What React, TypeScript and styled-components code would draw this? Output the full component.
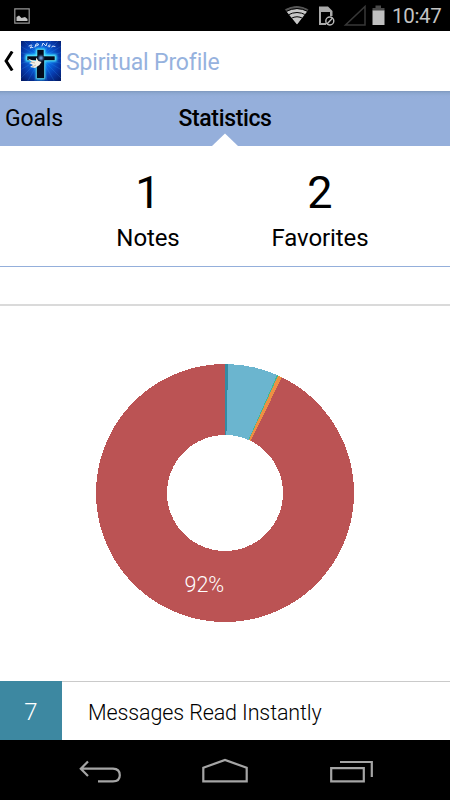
import React from 'react';
import styled, { createGlobalStyle } from 'styled-components';

const GlobalStyle = createGlobalStyle`
  * { box-sizing: border-box; }
  body { margin: 0; background: #fff; font-family: Roboto, "Open Sans", sans-serif; color: #000; }
  svg { display: block; flex: none; }
`;

const Screen = styled.div`
  width: 450px;
  height: 800px;
  display: flex;
  flex-direction: column;
  background: #fff;
  overflow: hidden;
`;

const StatusBar = styled.div`
  height: 31px;
  flex: none;
  display: flex;
  align-items: center;
  justify-content: space-between;
  padding: 0 8px 0 14px;
  background: #000;
`;

const StatusRight = styled.div`
  display: flex;
  align-items: center;
`;

const Clock = styled.span`
  margin-left: 7px;
  width: 50px;
  white-space: nowrap;
  font-size: 20.5px;
  line-height: 32px;
  height: 31px;
  color: #c4c4c4;
  letter-spacing: -0.3px;
`;

const Header = styled.header`
  height: 60px;
  flex: none;
  display: flex;
  align-items: center;
  padding-left: 3px;
`;

const AppIcon = styled.svg`
  margin-left: 7px;
`;

const Title = styled.h1`
  margin: 4px 0 0 5px;
  font-size: 23px;
  line-height: 30px;
  font-weight: 400;
  color: #96b2de;
  letter-spacing: -0.15px;
  white-space: nowrap;
`;

const Tabs = styled.nav`
  height: 55px;
  flex: none;
  display: grid;
  grid-template-columns: 150px 150px 150px;
  background: linear-gradient(#7f98bd 0, #8ca7d0 2px, #94aeda 5px, #95afdb 8px);
`;

const Tab = styled.div<{ $active?: boolean }>`
  position: relative;
  padding: ${p => (p.$active ? '0' : '0 0 0 5px')};
  text-align: ${p => (p.$active ? 'center' : 'left')};
  font-size: 23px;
  line-height: 55px;
  font-weight: ${p => (p.$active ? 500 : 400)};
  letter-spacing: ${p => (p.$active ? '-0.35px' : '-0.15px')};
`;

const Pointer = styled.svg`
  position: absolute;
  left: 62px;
  bottom: 0;
`;

const Totals = styled.section`
  height: 121px;
  flex: none;
  display: flex;
  padding: 18px 0 0 62px;
  border-bottom: 1px solid #94afdb;
`;

const Total = styled.div`
  width: 172px;
  text-align: center;
`;

const TotalValue = styled.div`
  font-size: 45px;
  line-height: 58px;
`;

const TotalLabel = styled.div`
  font-size: 24px;
  line-height: 33px;
  letter-spacing: -0.1px;
`;

const Spacer = styled.div`
  height: 39px;
  flex: none;
  border-bottom: 2px solid #dadada;
`;

const ChartPanel = styled.section`
  height: 375px;
  flex: none;
  display: flex;
  justify-content: center;
  padding-top: 58px;
`;

const ChartLabel = styled.text`
  font-family: Roboto, sans-serif;
  font-size: 21.5px;
  font-weight: 300;
  fill: #fff;
`;

const Row = styled.div`
  height: 59px;
  flex: none;
  display: flex;
  line-height: 62px;
  font-weight: 300;
`;

const Count = styled.div`
  width: 62px;
  background: #3d88a1;
  color: #fff;
  text-align: center;
  font-size: 24px;
`;

const RowLabel = styled.div`
  flex: 1;
  padding-left: 26px;
  border-top: 1px solid #cacaca;
  font-size: 21.5px;
  line-height: 61px;
  letter-spacing: -0.12px;
`;

const NavBar = styled.div`
  height: 60px;
  flex: none;
  background: #000;
`;

const CENTER = 129;
const OUTER = 129;
const INNER = 58;

const point = (radius: number, degrees: number) => {
  const a = (degrees * Math.PI) / 180;
  return `${CENTER + radius * Math.sin(a)} ${CENTER - radius * Math.cos(a)}`;
};

const slicePath = (from: number, to: number) => {
  const large = to - from > 180 ? 1 : 0;
  return `M${point(OUTER, from)} A${OUTER} ${OUTER} 0 ${large} 1 ${point(OUTER, to)} L${point(INNER, to)} A${INNER} ${INNER} 0 ${large} 0 ${point(INNER, from)}Z`;
};

const slices = [
  { from: 0, to: 1.4, color: '#358aa2' },
  { from: 1.4, to: 23.8, color: '#6bb5cf' },
  { from: 23.8, to: 24.3, color: '#43b88c' },
  { from: 24.3, to: 26.2, color: '#ed9043' },
  { from: 26.2, to: 360, color: '#bb5354' },
];

const Donut = () => (
  <svg width="258" height="258" viewBox="0 0 258 258">
    <g shapeRendering="crispEdges">
      {slices.map(s => <path key={s.from} d={slicePath(s.from, s.to)} fill={s.color} />)}
    </g>
    <ChartLabel x="88.5" y="227.5">92%</ChartLabel>
  </svg>
);

const rays = Array.from({ length: 24 }, (_, i) => i * 15);

const LogoIcon = () => (
  <AppIcon width="40" height="40" viewBox="0 0 40 40">
    <defs>
      <radialGradient id="sky" cx="50%" cy="45%" r="70%">
        <stop offset="0" stopColor="#20b4ff" />
        <stop offset=".35" stopColor="#0868e4" />
        <stop offset=".7" stopColor="#0738a8" />
        <stop offset="1" stopColor="#041c68" />
      </radialGradient>
      <filter id="glow" x="-40%" y="-40%" width="180%" height="180%">
        <feGaussianBlur stdDeviation=".8" />
      </filter>
      <clipPath id="tile"><rect width="40" height="40" /></clipPath>
    </defs>
    <rect width="40" height="40" fill="url(#sky)" />
    <g clipPath="url(#tile)" stroke="#34a5ff" strokeWidth=".6" opacity=".3">
      {rays.map(r => <path key={r} d="M20 17V-13" transform={`rotate(${r} 20 17)`} />)}
    </g>
    <path d="M15.5 8H23.5V14H35V20H23.5V38H15.5V20H5V14H15.5Z" fill="#48edff" stroke="#48edff" strokeWidth="1.2" filter="url(#glow)" />
    <path d="M16 8.5H23V15H34V19.5H23.5V37.5H15.5V19.5H6V15H16Z" fill="#030b1b" stroke="#62dfff" strokeWidth=".6" />
    <circle cx="20" cy="17" r="2.2" fill="#80b6ff" filter="url(#glow)" />
    <path d="M6.5 17.5 12 19.5 15 20 15 16.5 17.5 20 20.5 21 18.5 24 14 27 9 26 12 24 8 22 11 21Z" fill="#f4efe6" />
    <path d="M10 21 14 22M11 26 15 24" stroke="#a7957c" strokeWidth=".6" />
    <g fill="none" stroke="#e4edff" strokeWidth=".9" strokeLinecap="round" strokeLinejoin="round">
      <path d="M8 5Q11 3 11 4.5L9 7Q11 6 12 6.5" />
      <path d="M14 6 15 3Q18 2 17.5 4L15 5" />
      <path d="M21 5 22 2 25 5 26 2M28 4Q26 6 28.5 6L29 4M31 6 31.5 5 34 5.5" />
    </g>
  </AppIcon>
);

const StatusIcons = () => (
  <svg width="101" height="31" viewBox="284 0 101 31">
    <clipPath id="wifi"><path d="M284.5 9Q296.5 2.5 309 9L297 24.5Z" /></clipPath>
    <g clipPath="url(#wifi)">
      <path d="M284 10Q297 2 309 10L297 25Z" fill="#555" />
      <path d="M286 12Q297 6 308 12L297 25Z" fill="#c7c7c7" />
      <g fill="none" stroke="#000" strokeWidth="1">
        <path d="M286 11.5Q297 5.5 308 11.5M288 15Q297 10 306 15M291 18.5Q297 15 303 18.5" />
      </g>
    </g>
    <path d="M319 6.5H328L332.5 11V16H330V12H321V23H326V25H319Z" fill="#aaa" />
    <circle cx="329.8" cy="21" r="4" fill="#000" stroke="#bdbdbd" strokeWidth="1.4" />
    <path d="m327 24 5.6-6" stroke="#bdbdbd" strokeWidth="1.4" />
    <path d="M345.5 25H365V6.5Z" fill="none" stroke="#383838" strokeWidth="1.5" />
    <path d="M375.5 5.5H381V8H384.5V11H372.5V8H375.5Z" fill="#4a4a4a" />
    <path d="M372.5 10.5H384.5V25H372.5Z" fill="#c0c0c0" />
  </svg>
);

export default function App() {
  return (
    <>
      <GlobalStyle />
      <Screen>
        <StatusBar>
          <svg width="16" height="16" viewBox="0 0 16 16">
            <path d="M.8.8H15.2V15.2H.8Z" fill="none" stroke="#969696" strokeWidth="1.2" />
            <path d="M2.5 13V9L5 7.5 7.5 10 11 9 13.5 11V13Z" fill="#c2c2c2" />
          </svg>
          <StatusRight>
            <StatusIcons />
            <Clock>10:47</Clock>
          </StatusRight>
        </StatusBar>
        <Header>
          <svg width="11" height="20" viewBox="0 0 11 20">
            <path d="M9.2.5 3.1 10 9.2 19.5" fill="none" stroke="#000" strokeWidth="3" />
          </svg>
          <LogoIcon />
          <Title>Spiritual Profile</Title>
        </Header>
        <Tabs>
          <Tab>Goals</Tab>
          <Tab $active>
            Statistics
            <Pointer width="26" height="13" viewBox="0 0 26 13"><path d="M0 13 13 .5 26 13Z" fill="#fff" /></Pointer>
          </Tab>
        </Tabs>
        <Totals>
          <Total><TotalValue>1</TotalValue><TotalLabel>Notes</TotalLabel></Total>
          <Total><TotalValue>2</TotalValue><TotalLabel>Favorites</TotalLabel></Total>
        </Totals>
        <Spacer />
        <ChartPanel><Donut /></ChartPanel>
        <Row>
          <Count>7</Count>
          <RowLabel>Messages Read Instantly</RowLabel>
        </Row>
        <NavBar>
          <svg width="450" height="60" viewBox="0 740 450 60" fill="none" stroke="#a5a5a5" strokeWidth="2.2">
            <path d="M80.5 768.7H113Q119.8 769 119.8 775.2 119.8 781.3 113 781.3H98M88 761.5 80.8 768.7 88 776" />
            <path d="M203.3 781.3V767.7L225 760 246.7 767.7V781.3Z" />
            <path d="M331.2 768.2H363.8V781.3H331.2ZM340 762H371.8V777" />
          </svg>
        </NavBar>
      </Screen>
    </>
  );
}
